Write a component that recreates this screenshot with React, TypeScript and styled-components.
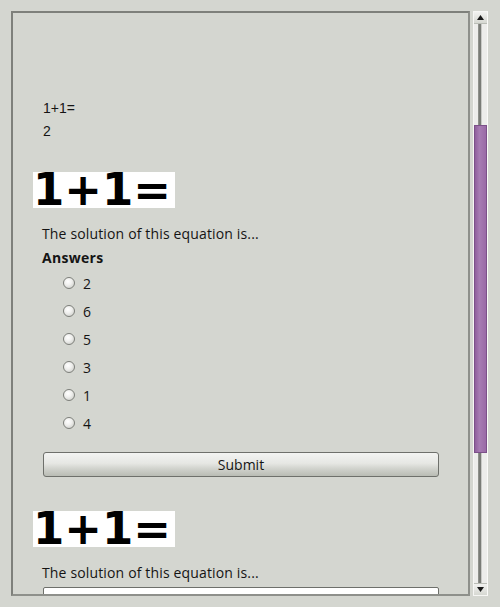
import React from "react";
import styled, { createGlobalStyle } from "styled-components";

const GlobalStyle = createGlobalStyle`
  html, body {
    margin: 0;
    padding: 0;
    background: #d4d6d0;
  }
  body {
    font-family: "Open Sans", "DejaVu Sans", sans-serif;
    color: #141414;
  }
`;

const Page = styled.div`
  display: flex;
  gap: 3px;
  padding: 11px 10px 11px 11px;
  height: 607px;
  box-sizing: border-box;
`;

const Frame = styled.div`
  width: 459px;
  height: 585px;
  box-sizing: border-box;
  border: 2px solid #7e807b;
  border-right-color: #8e908b;
  border-bottom-color: #8e908b;
  overflow: hidden;
`;

const Content = styled.div`
  padding: 84px 31px 0 20px;
`;

const PlainLine = styled.div`
  font-family: "Liberation Sans", Arial, sans-serif;
  font-size: 14px;
  line-height: 23px;
  margin-left: 10px;
`;

const Question = styled.div<{ $top: number }>`
  margin-top: ${(p) => p.$top}px;
`;

const EquationPic = styled.div`
  display: inline-block;
  background: #fff;
  height: 36px;
  width: 142px;
  font-family: "DejaVu Sans", sans-serif;
  font-weight: bold;
  font-size: 45px;
  line-height: 36px;
  color: #000;
  white-space: nowrap;
  vertical-align: top;
`;

const Prompt = styled.div`
  margin: 16px 0 0 9px;
  font-size: 14px;
  line-height: 20px;
  letter-spacing: 0.15px;
`;

const AnswersTitle = styled.div`
  margin: 4px 0 0 9px;
  font-size: 14px;
  font-weight: bold;
  line-height: 20px;
  letter-spacing: 0.3px;
`;

const Options = styled.div`
  margin: 1px 0 0 30px;
  display: flex;
  flex-direction: column;
`;

const Option = styled.label`
  display: flex;
  align-items: center;
  gap: 8px;
  height: 28px;
  font-size: 14px;
`;

const Radio = styled.span`
  width: 12px;
  height: 12px;
  border-radius: 50%;
  box-sizing: border-box;
  border: 1px solid #7d7f7a;
  background: radial-gradient(circle at 40% 35%, #ffffff 0%, #f0f0ee 40%, #c4c6c0 100%);
`;

const SubmitButton = styled.button`
  display: block;
  margin: 15px 0 0 10px;
  width: 396px;
  height: 25px;
  border: 1px solid #6e706b;
  border-radius: 3px;
  background: linear-gradient(#f3f4f2 0%, #e6e7e3 45%, #cfd1cb 70%, #b9bcb4 100%);
  font-family: "Open Sans", "DejaVu Sans", sans-serif;
  font-size: 14px;
  color: #141414;
  padding: 0;
`;

const TextInput = styled.div`
  margin: 4px 0 0 10px;
  width: 396px;
  height: 20px;
  box-sizing: border-box;
  background: #fff;
  border: 1px solid #6e706b;
  border-radius: 2px;
`;

const Scrollbar = styled.div`
  width: 15px;
  height: 585px;
  box-sizing: border-box;
  border: 1px solid #f6f6f4;
  border-right-color: #fafaf8;
  background: #ececea;
  display: flex;
  flex-direction: column;
`;

const ArrowButton = styled.div`
  height: 11px;
  display: flex;
  align-items: center;
  justify-content: center;
  background: linear-gradient(#f2f2f0, #d6d8d2);
  border-bottom: 1px solid #babdb6;
  &:last-child {
    border-bottom: none;
    border-top: 1px solid #babdb6;
  }
`;

const Track = styled.div`
  flex: 1;
  display: flex;
  flex-direction: column;
  background: linear-gradient(
    to right,
    #ededeb 0,
    #ededeb 4px,
    #a4a6a1 4px,
    #7a7c77 5px,
    #7a7c77 7px,
    #a4a6a1 7px,
    #ededeb 8px
  );
`;

const Thumb = styled.div<{ $top: number; $height: number }>`
  margin-top: ${(p) => p.$top}px;
  height: ${(p) => p.$height}px;
  box-sizing: border-box;
  background: linear-gradient(to right, #8f5f9c, #a77cb3 40%, #9a6aa6);
  border: 1px solid #7c5089;
`;

const Arrow = ({ up }: { up?: boolean }) => (
  <svg width="7" height="5" viewBox="0 0 7 5">
    <path d={up ? "M3.5 0 L7 5 L0 5 Z" : "M0 0 L7 0 L3.5 5 Z"} fill="#1a1a1a" />
  </svg>
);

const answers = ["2", "6", "5", "3", "1", "4"];

export default function App() {
  return (
    <>
      <GlobalStyle />
      <Page>
        <Frame>
          <Content>
            <PlainLine>1+1=</PlainLine>
            <PlainLine>2</PlainLine>
            <Question $top={29}>
              <EquationPic>1+1=</EquationPic>
              <Prompt>The solution of this equation is...</Prompt>
              <AnswersTitle>Answers</AnswersTitle>
              <Options>
                {answers.map((a, i) => (
                  <Option key={i}>
                    <Radio />
                    {a}
                  </Option>
                ))}
              </Options>
              <SubmitButton>Submit</SubmitButton>
            </Question>
            <Question $top={34}>
              <EquationPic>1+1=</EquationPic>
              <Prompt>The solution of this equation is...</Prompt>
              <TextInput />
            </Question>
          </Content>
        </Frame>
        <Scrollbar>
          <ArrowButton>
            <Arrow up />
          </ArrowButton>
          <Track>
            <Thumb $top={101} $height={328} />
          </Track>
          <ArrowButton>
            <Arrow />
          </ArrowButton>
        </Scrollbar>
      </Page>
    </>
  );
}
